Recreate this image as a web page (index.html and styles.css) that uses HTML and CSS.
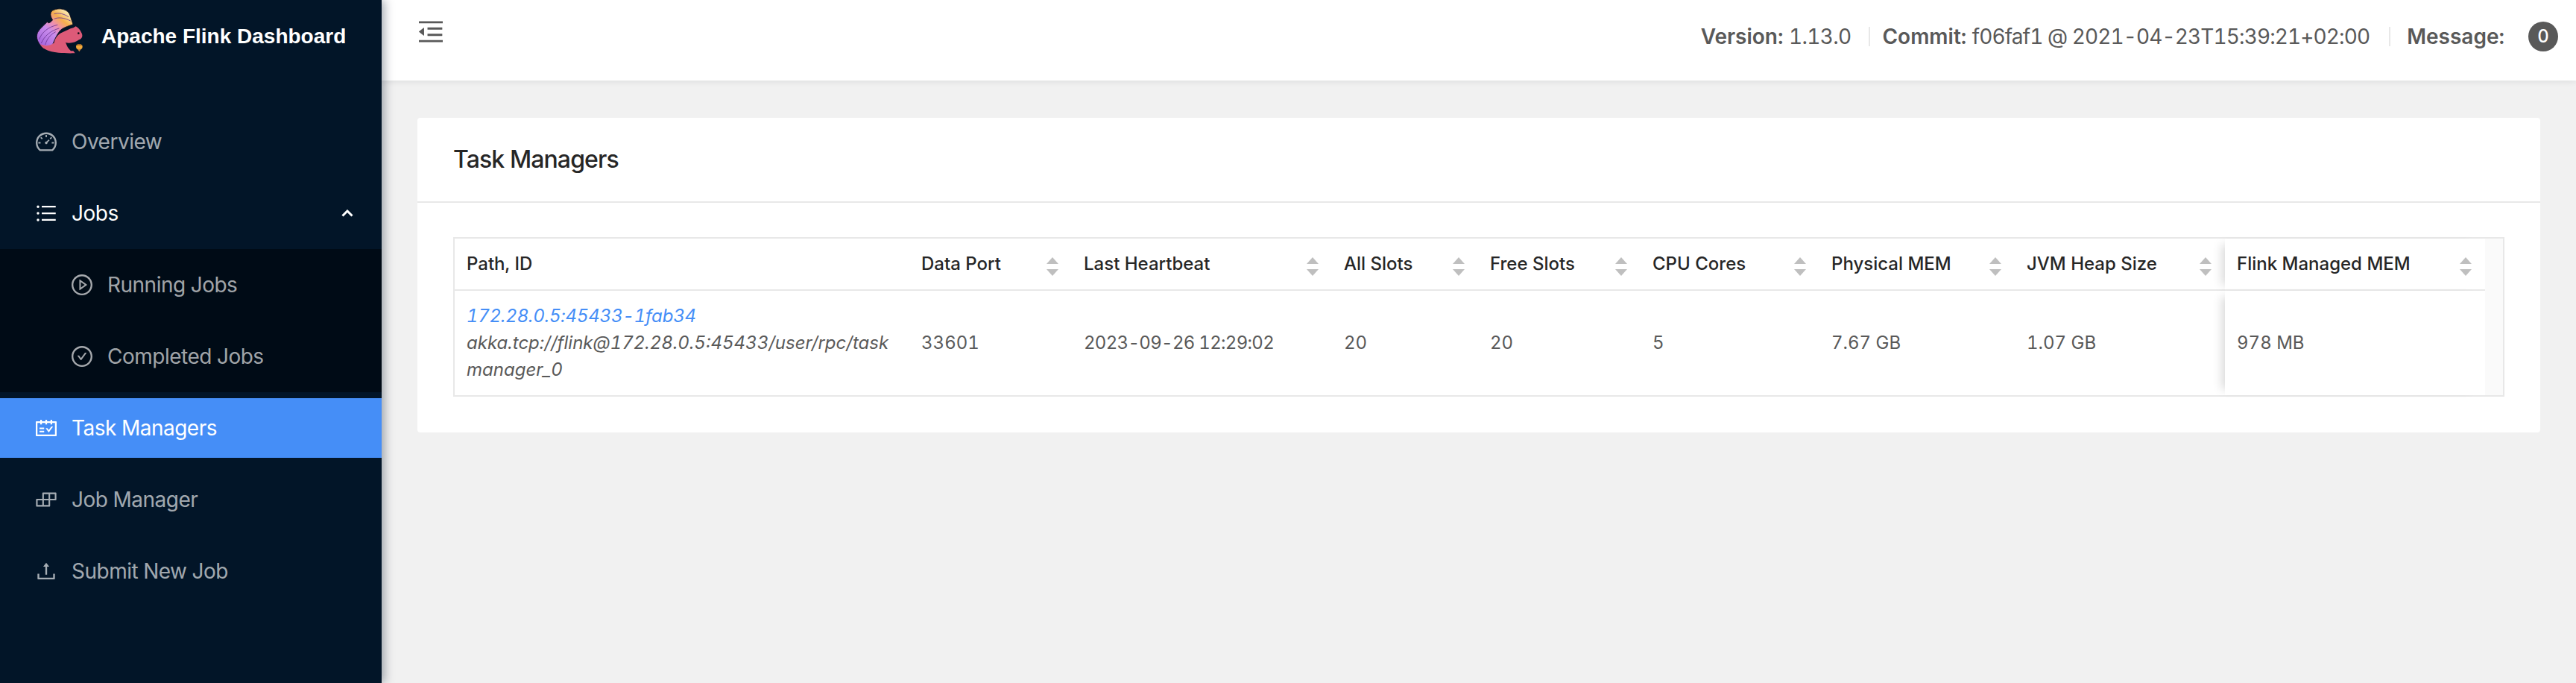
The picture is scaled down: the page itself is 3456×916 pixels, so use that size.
FILE: index.html
```html
<!DOCTYPE html>
<html lang="en">
<head>
    <meta charset="UTF-8">
    <title>Apache Flink Dashboard</title>
    <link rel="stylesheet" href="styles.css">
</head>
<body>
<div class="app">
    <aside class="sidebar">
        <div class="brand">
            <svg class="brand-logo" viewBox="58 30 184 186">
                <defs>
                    <linearGradient id="tail" x1="0.1" y1="0.9" x2="0.75" y2="0.05">
                        <stop offset="0" stop-color="#a565dc"/>
                        <stop offset="0.4" stop-color="#c98ced"/>
                        <stop offset="0.6" stop-color="#ef8fae"/>
                        <stop offset="0.8" stop-color="#f4ae4c"/>
                        <stop offset="1" stop-color="#fae3a6"/>
                    </linearGradient>
                </defs>
                <path fill="url(#tail)" stroke="#120c18" stroke-width="2.500" d="M85 195C62 175 52 150 62 130C72 112 90 100 100 88C104 96 112 92 122 80C112 66 110 50 122 42C150 28 185 38 192 62L204 98C185 105 160 112 150 125C135 145 125 170 118 190Z"/>
                <path fill="none" stroke="#6a3590" stroke-width="2.500" d="M68 158C78 130 104 108 142 100M76 174C88 146 112 124 148 114M92 180C98 160 110 140 134 128M128 76C146 68 170 72 194 84M128 56C146 50 168 56 186 68"/>
                <path fill="#dd5a78" d="M72 178C84 206 130 216 212 214L205 205L195 205C185 195 178 185 175 172C195 176 215 170 228 160C242 155 244 142 238 132C232 118 222 110 215 106L205 112C190 115 175 125 165 128C148 134 132 150 128 172C112 186 92 186 72 178Z"/>
                <circle cx="226" cy="134" r="4" fill="#120c18"/>
                <path fill="none" stroke="#120c18" stroke-width="2.500" d="M175 172C182 182 196 186 208 180"/>
                <ellipse cx="229" cy="188" rx="13" ry="11" fill="#f2a93b"/>
                <path fill="#7a4218" d="M216 184C222 176 236 176 242 184C236 181 222 181 216 184Z"/>
                <path fill="#c9803a" d="M222 197L236 197L229 208Z"/>
            </svg>
            <span class="brand-name">Apache Flink Dashboard</span>
        </div>
        <ul class="menu">
            <li class="menu-item">
                <svg class="icon" viewBox="64 64 896 896"><path d="M924.8 385.6a446.7 446.7 0 0 0-96-142.4 446.7 446.7 0 0 0-142.4-96C631.1 123.8 572.5 112 512 112s-119.1 11.8-174.4 35.2a446.7 446.7 0 0 0-142.4 96 446.7 446.7 0 0 0-96 142.4C75.8 440.9 64 499.5 64 560c0 132.7 58.3 257.7 159.9 343.1l1.7 1.4c5.8 4.8 13.1 7.5 20.6 7.5h531.7c7.5 0 14.8-2.7 20.6-7.5l1.7-1.4C901.7 817.7 960 692.7 960 560c0-60.5-11.9-119.1-35.2-174.4zM761.4 836H262.6A371.12 371.12 0 0 1 140 560c0-99.4 38.7-192.8 109-263 70.3-70.3 163.7-109 263-109 99.4 0 192.8 38.7 263 109 70.3 70.3 109 163.7 109 263 0 105.6-44.5 205.5-122.6 276zM623.5 421.5a8.03 8.03 0 0 0-11.3 0L527.7 506c-18.7-5-39.4-.2-54.1 14.5a55.95 55.95 0 0 0 0 79.2 55.95 55.95 0 0 0 79.2 0 55.87 55.87 0 0 0 14.5-54.1l84.5-84.5c3.1-3.1 3.1-8.2 0-11.3l-28.3-28.3zM490 320h44c4.4 0 8-3.6 8-8v-80c0-4.4-3.6-8-8-8h-44c-4.4 0-8 3.6-8 8v80c0 4.4 3.6 8 8 8zm260 218v44c0 4.4 3.6 8 8 8h80c4.4 0 8-3.6 8-8v-44c0-4.4-3.6-8-8-8h-80c-4.4 0-8 3.6-8 8zm12.7-197.2l-31.1-31.1a8.03 8.03 0 0 0-11.3 0l-56.6 56.6a8.03 8.03 0 0 0 0 11.3l31.1 31.1c3.1 3.1 8.2 3.1 11.3 0l56.6-56.6c3.1-3.1 3.1-8.2 0-11.3zm-458.6-31.1a8.03 8.03 0 0 0-11.3 0l-31.1 31.1a8.03 8.03 0 0 0 0 11.3l56.6 56.6c3.1 3.1 8.2 3.1 11.3 0l31.1-31.1c3.1-3.1 3.1-8.2 0-11.3l-56.6-56.6zM262 530h-80c-4.4 0-8 3.6-8 8v44c0 4.4 3.6 8 8 8h80c4.4 0 8-3.6 8-8v-44c0-4.4-3.6-8-8-8z"/></svg>
                <span>Overview</span>
            </li>
            <li class="menu-item menu-open">
                <svg class="icon" viewBox="64 64 896 896"><path d="M912 192H328c-4.4 0-8 3.6-8 8v56c0 4.4 3.6 8 8 8h584c4.4 0 8-3.6 8-8v-56c0-4.4-3.6-8-8-8zm0 284H328c-4.4 0-8 3.6-8 8v56c0 4.4 3.6 8 8 8h584c4.4 0 8-3.6 8-8v-56c0-4.4-3.6-8-8-8zm0 284H328c-4.4 0-8 3.6-8 8v56c0 4.4 3.6 8 8 8h584c4.4 0 8-3.6 8-8v-56c0-4.4-3.6-8-8-8zM104 228a56 56 0 1 0 112 0 56 56 0 1 0-112 0zm0 284a56 56 0 1 0 112 0 56 56 0 1 0-112 0zm0 284a56 56 0 1 0 112 0 56 56 0 1 0-112 0z"/></svg>
                <span>Jobs</span>
                <svg class="arrow" viewBox="0 0 16 10"><path d="M1.5 8.5L8 2l6.500 6.500"/></svg>
            </li>
            <li class="submenu">
                <ul>
                    <li class="menu-item sub-item">
                        <svg class="icon" viewBox="64 64 896 896"><path d="M512 64C264.600 64 64 264.600 64 512s200.600 448 448 448 448-200.600 448-448S759.400 64 512 64zm0 820c-205.400 0-372-166.600-372-372s166.600-372 372-372 372 166.600 372 372-166.600 372-372 372z"/><path d="M719.400 499.100l-296.100-215A15.900 15.900 0 0 0 398 297v430c0 13.100 14.800 20.500 25.300 12.900l296.100-215a15.900 15.900 0 0 0 0-25.800zm-257.600 134V390.900L628.500 512 461.800 633.100z"/></svg>
                        <span>Running Jobs</span>
                    </li>
                    <li class="menu-item sub-item">
                        <svg class="icon" viewBox="64 64 896 896"><path d="M699 353h-46.900c-10.200 0-19.900 4.900-25.900 13.300L469 584.300l-71.200-98.800c-6-8.300-15.600-13.300-25.900-13.300H325c-6.500 0-10.300 7.400-6.500 12.700l124.600 172.800a31.800 31.800 0 0 0 51.700 0l210.600-292c3.900-5.300.1-12.700-6.400-12.700z"/><path d="M512 64C264.600 64 64 264.600 64 512s200.600 448 448 448 448-200.600 448-448S759.400 64 512 64zm0 820c-205.400 0-372-166.600-372-372s166.600-372 372-372 372 166.600 372 372-166.600 372-372 372z"/></svg>
                        <span>Completed Jobs</span>
                    </li>
                </ul>
            </li>
            <li class="menu-item menu-active">
                <svg class="icon" viewBox="64 64 896 896"><path d="M928 224H768v-56c0-4.400-3.600-8-8-8h-56c-4.400 0-8 3.600-8 8v56H548v-56c0-4.400-3.600-8-8-8h-56c-4.400 0-8 3.600-8 8v56H328v-56c0-4.400-3.600-8-8-8h-56c-4.400 0-8 3.600-8 8v56H96c-17.700 0-32 14.300-32 32v576c0 17.700 14.300 32 32 32h832c17.700 0 32-14.300 32-32V256c0-17.700-14.300-32-32-32zm-40 568H136V296h120v56c0 4.400 3.600 8 8 8h56c4.400 0 8-3.600 8-8v-56h148v56c0 4.400 3.600 8 8 8h56c4.400 0 8-3.600 8-8v-56h148v56c0 4.400 3.600 8 8 8h56c4.400 0 8-3.600 8-8v-56h120v496zM416 496H232c-4.400 0-8 3.600-8 8v48c0 4.400 3.600 8 8 8h184c4.400 0 8-3.600 8-8v-48c0-4.400-3.600-8-8-8zm0 136H232c-4.400 0-8 3.600-8 8v48c0 4.400 3.600 8 8 8h184c4.400 0 8-3.600 8-8v-48c0-4.400-3.600-8-8-8zm308.200-177.400L620.600 598.300l-52.800-73c-3-4.200-7.800-6.600-12.900-6.600H500c-6.500 0-10.300 7.400-6.500 12.700l114.100 158.200a15.900 15.900 0 0 0 25.800 0l165-228.700c3.800-5.300 0-12.700-6.500-12.700H737c-5-.1-9.800 2.400-12.800 6.500z"/></svg>
                <span>Task Managers</span>
            </li>
            <li class="menu-item">
                <svg class="icon" viewBox="64 64 896 896"><path d="M916 210H376c-17.700 0-32 14.300-32 32v236H108c-17.700 0-32 14.300-32 32v272c0 17.700 14.300 32 32 32h540c17.700 0 32-14.300 32-32V546h236c17.700 0 32-14.300 32-32V242c0-17.700-14.300-32-32-32zm-504 68h200v200H412V278zm-68 468H144V546h200v200zm268 0H412V546h200v200zm268-268H680V278h200v200z"/></svg>
                <span>Job Manager</span>
            </li>
            <li class="menu-item">
                <svg class="icon" viewBox="64 64 896 896"><path d="M400 317.700h73.900V656c0 4.400 3.600 8 8 8h60c4.400 0 8-3.600 8-8V317.700H624c6.700 0 10.400-7.700 6.300-12.900L518.300 163a8 8 0 0 0-12.600 0l-112 141.700c-4.100 5.300-.4 13 6.300 13zM878 626h-60c-4.400 0-8 3.600-8 8v154H214V634c0-4.400-3.600-8-8-8h-60c-4.400 0-8 3.600-8 8v198c0 17.700 14.300 32 32 32h684c17.700 0 32-14.300 32-32V634c0-4.400-3.600-8-8-8z"/></svg>
                <span>Submit New Job</span>
            </li>
        </ul>
    </aside>
    <div class="main">
        <header class="topbar">
            <svg class="fold" viewBox="112 160 800 704"><path d="M408 442h480c4.400 0 8-3.600 8-8v-56c0-4.400-3.600-8-8-8H408c-4.400 0-8 3.600-8 8v56c0 4.400 3.600 8 8 8zm-8 204c0 4.400 3.600 8 8 8h480c4.400 0 8-3.600 8-8v-56c0-4.400-3.600-8-8-8H408c-4.400 0-8 3.600-8 8v56zm504-486H120c-4.400 0-8 3.600-8 8v56c0 4.400 3.600 8 8 8h784c4.400 0 8-3.600 8-8v-56c0-4.400-3.600-8-8-8zm0 632H120c-4.400 0-8 3.600-8 8v56c0 4.400 3.600 8 8 8h784c4.400 0 8-3.600 8-8v-56c0-4.400-3.600-8-8-8zM115.400 518.900L271.700 642c5.800 4.600 14.400.5 14.400-6.900V388.900c0-7.400-8.500-11.500-14.400-6.900L115.400 505.100a8.740 8.740 0 0 0 0 13.800z"/></svg>
            <div class="status">
                <span class="status-item"><strong>Version:</strong> <span class="status-value">1.13.0</span></span>
                <i class="status-line"></i>
                <span class="status-item"><strong>Commit:</strong> <span class="status-value commit-value">f06faf1 @ 2021-04-23T15:39:21+02:00</span></span>
                <i class="status-line status-line-last"></i>
                <span class="status-item"><strong>Message:</strong></span>
                <span class="badge">0</span>
            </div>
        </header>
        <section class="content">
            <div class="card">
                <h2 class="card-title">Task Managers</h2>
                <div class="card-body">
                    <div class="table-wrap">
                        <table class="tm-table">
                            <colgroup>
                                <col class="c-path"><col class="c-port"><col class="c-beat"><col class="c-all"><col class="c-free"><col class="c-cpu"><col class="c-phys"><col class="c-heap"><col class="c-flink">
                            </colgroup>
                            <thead>
                                <tr>
                                    <th>Path, ID</th>
                                    <th class="sortable">Data Port</th>
                                    <th class="sortable">Last Heartbeat</th>
                                    <th class="sortable">All Slots</th>
                                    <th class="sortable">Free Slots</th>
                                    <th class="sortable">CPU Cores</th>
                                    <th class="sortable">Physical MEM</th>
                                    <th class="sortable">JVM Heap Size</th>
                                    <th class="sortable fixed">Flink Managed MEM</th>
                                </tr>
                            </thead>
                            <tbody>
                                <tr>
                                    <td class="path-cell">
                                        <a class="tm-link">172.28.0.5:45433-1fab34</a>
                                        <div>akka.tcp://flink@172.28.0.5:45433/user/rpc/task manager_0</div>
                                    </td>
                                    <td>33601</td>
                                    <td class="date-cell">2023-09-26 12:29:02</td>
                                    <td>20</td>
                                    <td>20</td>
                                    <td>5</td>
                                    <td>7.67 GB</td>
                                    <td>1.07 GB</td>
                                    <td class="fixed">978 MB</td>
                                </tr>
                            </tbody>
                        </table>
                        <div class="scroll-strip"></div>
                    </div>
                </div>
            </div>
        </section>
    </div>
</div>
</body>
</html>
```

FILE: styles.css
```css
* {
    margin: 0;
    padding: 0;
    box-sizing: border-box;
}

ul {
    list-style: none;
}

html, body {
    height: 100%;
}

body {
    background-color: #f1f1f1;
    font-family: Inter, "Liberation Sans", sans-serif;
    font-size: 24px;
    font-variant-numeric: tabular-nums;
    color: #595959;
    overflow: hidden;
}

.app {
    display: flex;
    height: 100%;
}

/* sidebar */
.sidebar {
    width: 512px;
    flex: none;
    background-color: #021528;
    box-shadow: 4px 0 12px rgba(0, 21, 41, 0.35);
    position: relative;
    z-index: 2;
}

.brand {
    height: 102px;
    display: flex;
    align-items: flex-start;
    padding: 10px 0 0 49px;
}

.brand-logo {
    width: 62px;
    height: 62px;
    flex: none;
}

.brand-name {
    margin: 21px 0 0 25px;
    font-family: "Liberation Sans", Arial, sans-serif;
    font-size: 28px;
    line-height: 36px;
    font-weight: 700;
    color: #fff;
    white-space: nowrap;
}

.menu {
    padding-top: 48px;
}

.menu-item {
    height: 80px;
    margin-bottom: 16px;
    padding-left: 48px;
    display: flex;
    align-items: center;
    gap: 20px;
    font-size: 28px;
    letter-spacing: -0.5px;
    color: rgba(255, 255, 255, 0.65);
}

.icon {
    width: 28px;
    height: 28px;
    flex: none;
    fill: currentColor;
}

.menu-open {
    color: #fff;
    margin-bottom: 8px;
    position: relative;
}

.arrow {
    width: 16px;
    height: 10px;
    position: absolute;
    right: 38px;
    top: 35px;
    fill: none;
    stroke: #fff;
    stroke-width: 3;
}

.submenu {
    background-color: #000b16;
    margin-bottom: 8px;
}

.submenu ul {
    padding: 8px 0;
}

.sub-item {
    padding-left: 96px;
}

.sub-item:last-child {
    margin-bottom: 0;
}

.menu-active {
    background-color: #458ef7;
    color: #fff;
}

/* top bar */
.main {
    flex: 1;
    min-width: 0;
    display: flex;
    flex-direction: column;
}

.topbar {
    height: 108px;
    flex: none;
    background-color: #fff;
    box-shadow: 0 2px 8px rgba(0, 21, 41, 0.08);
    display: flex;
    justify-content: space-between;
    align-items: flex-start;
    padding: 28px 24px 0 50px;
    position: relative;
}

.fold {
    width: 32px;
    height: 29px;
    fill: #595959;
}

.status {
    display: flex;
    align-items: center;
    height: 40px;
    margin-top: 1px;
    font-size: 28px;
    white-space: nowrap;
}

.status-item strong {
    font-weight: 600;
}

.status-value {
    letter-spacing: -0.7px;
}

.commit-value {
    letter-spacing: -0.9px;
}

.status-line {
    width: 2px;
    height: 26px;
    background-color: #e8e8e8;
    margin: 0 16px 0 24px;
}

.status-line-last {
    margin: 0 22px 0 26px;
}

.badge {
    width: 40px;
    height: 40px;
    border-radius: 50%;
    background-color: #595959;
    color: #fff;
    font-size: 24px;
    font-weight: 500;
    text-align: center;
    line-height: 40px;
    margin-left: 32px;
}

/* card */
.content {
    padding: 50px 48px;
}

.card {
    background-color: #fff;
    border-radius: 4px;
}

.card-title {
    height: 114px;
    padding: 0 48px;
    border-bottom: 2px solid #e8e8e8;
    font-size: 32px;
    font-weight: 500;
    letter-spacing: -0.9px;
    line-height: 112px;
    color: #262626;
}

.card-body {
    padding: 46px 48px 48px;
}

.table-wrap {
    display: flex;
    border: 2px solid #e8e8e8;
}

.tm-table {
    width: 2724px;
    flex: none;
    table-layout: fixed;
    border-collapse: separate;
    border-spacing: 0;
}

.c-path { width: 610px; }
.c-port { width: 218px; }
.c-beat { width: 349px; }
.c-all { width: 196px; }
.c-free { width: 218px; }
.c-cpu { width: 240px; }
.c-phys { width: 262px; }
.c-heap { width: 282px; }
.c-flink { width: 349px; }

.tm-table th,
.tm-table td {
    padding: 16px;
    line-height: 36px;
    text-align: left;
    background-color: #fff;
    position: relative;
}

.tm-table th {
    font-weight: 500;
    color: #262626;
    border-bottom: 2px solid #e8e8e8;
    white-space: nowrap;
}

.sortable::before,
.sortable::after {
    content: "";
    position: absolute;
    right: 18px;
    border-left: 8px solid transparent;
    border-right: 8px solid transparent;
}

.sortable::before {
    top: 25px;
    border-bottom: 9px solid #bfbfbf;
}

.sortable::after {
    top: 41px;
    border-top: 9px solid #bfbfbf;
}

.tm-table .fixed {
    box-shadow: -12px 0 12px -8px rgba(0, 0, 0, 0.15);
}

.path-cell {
    font-style: italic;
    word-break: break-all;
}

.date-cell {
    letter-spacing: -0.7px;
}

.tm-link {
    display: block;
    letter-spacing: -0.2px;
    color: #458ef7;
}

.scroll-strip {
    flex: 1;
    background-color: #fafafa;
}
```
